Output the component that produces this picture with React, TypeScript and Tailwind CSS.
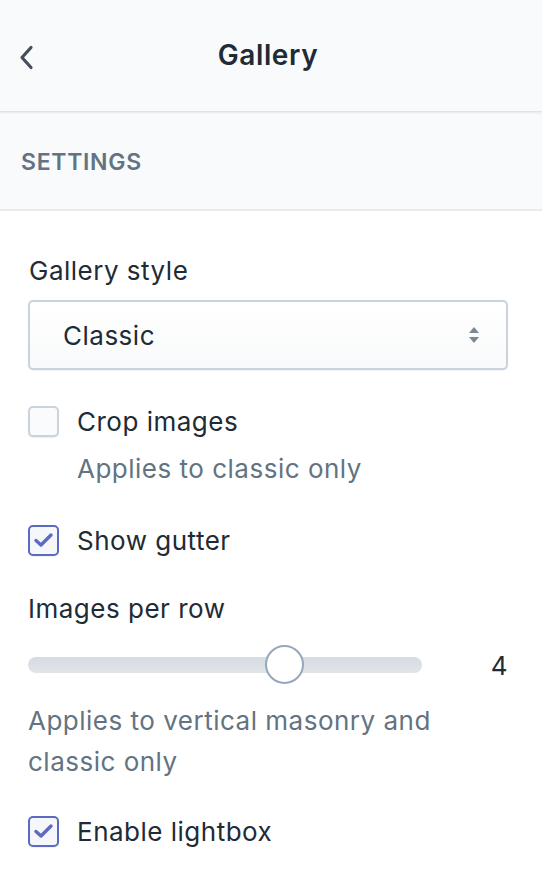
import { useState } from "react";

const font = { fontFamily: "Inter, 'Noto Sans', sans-serif" };

function Checkbox({ checked, label, onToggle }: { checked: boolean; label: string; onToggle: () => void }) {
  return (
    <label className="flex items-center h-[32px] cursor-pointer" onClick={onToggle}>
      <span
        className={
          checked
            ? "w-[31px] h-[31px] rounded-[5px] border-2 border-[#5c6ac4] bg-[#f6f7fb] flex items-center justify-center shadow-[0_1px_1px_rgba(0,0,0,0.06)]"
            : "w-[31px] h-[31px] rounded-[5px] border-2 border-[#cad3dc] bg-[#fafbfc] shadow-[0_1px_1px_rgba(0,0,0,0.08)]"
        }
      >
        {checked && (
          <svg width="21" height="16" viewBox="0 0 21 16" fill="none">
            <path d="M3 8.5 L8 13 L18 3" stroke="#5c6ac4" strokeWidth="3.4" strokeLinecap="round" strokeLinejoin="round" />
          </svg>
        )}
      </span>
      <span className="ml-[18px] text-[26px] tracking-[0.5px] text-[#212b36]">{label}</span>
    </label>
  );
}

export default function App() {
  const [crop, setCrop] = useState(false);
  const [gutter, setGutter] = useState(true);
  const [lightbox, setLightbox] = useState(true);

  return (
    <div className="w-[542px] h-[884px] bg-white overflow-hidden" style={font}>
      {/* Header */}
      <header className="relative h-[112px] bg-[#f9fafb] border-b border-[#dfe3e8] shadow-[0_1px_2px_rgba(0,0,0,0.08)] flex items-center justify-center">
        <button className="absolute left-[16px] top-[44px] w-[20px] h-[26px] flex items-center justify-center">
          <svg width="15" height="25" viewBox="0 0 15 25" fill="none">
            <path d="M12 2.5 L3 12.5 L12 22.5" stroke="#454f5b" strokeWidth="3.2" strokeLinecap="round" strokeLinejoin="round" />
          </svg>
        </button>
        <h1 className="text-[28px] tracking-[0.6px] font-semibold text-[#212b36] -mt-[2px] -ml-[6px]">Gallery</h1>
      </header>

      {/* Section title */}
      <div className="h-[99px] bg-[#f9fafb] border-b-2 border-[#e9ecef] flex items-center px-[21px]">
        <span className="text-[23px] font-semibold uppercase tracking-[0.03em] text-[#637381] mt-[3px]">Settings</span>
      </div>

      {/* Settings */}
      <div className="pl-[28px] pr-[34px] pt-[44px] text-[26px] tracking-[0.5px]">
        <div className="leading-[32px] text-[#212b36] pl-[1px]">Gallery style</div>
        <button className="mt-[13px] w-full h-[70px] rounded-[5px] border-2 border-[#c9d3dd] bg-gradient-to-b from-white to-[#f9fafb] shadow-[0_1px_1px_rgba(0,0,0,0.06)] flex items-center justify-between pl-[33px] pr-[26px]">
          <span className="text-[26px] tracking-[0.5px] text-[#212b36]">Classic</span>
          <svg width="12" height="18" viewBox="0 0 12 18">
            <path d="M6 1 L11 7 L1 7 Z" fill="#7a8896" />
            <path d="M6 17 L11 11 L1 11 Z" fill="#7a8896" />
          </svg>
        </button>

        <div className="mt-[35px]">
          <Checkbox checked={crop} label="Crop images" onToggle={() => setCrop(!crop)} />
        </div>
        <div className="mt-[16px] pl-[49px] leading-[32px] text-[#637381]">Applies to classic only</div>

        <div className="mt-[39px]">
          <Checkbox checked={gutter} label="Show gutter" onToggle={() => setGutter(!gutter)} />
        </div>

        <div className="mt-[37px] leading-[32px] text-[#212b36]">Images per row</div>

        <div className="mt-[20px] h-[40px] flex items-center">
          <div className="relative w-[394px] h-[16px] rounded-full bg-gradient-to-b from-[#d5dbe1] to-[#e0e5ea]">
            <div className="absolute left-[237px] top-[-12px] w-[39px] h-[39px] rounded-full bg-white border-2 border-[#95a8bb]" />
          </div>
          <span className="ml-auto text-[#212b36]">4</span>
        </div>

        <div className="mt-[15px] leading-[41px] text-[#637381]">
          Applies to vertical masonry and
          <br />
          classic only
        </div>

        <div className="mt-[33px]">
          <Checkbox checked={lightbox} label="Enable lightbox" onToggle={() => setLightbox(!lightbox)} />
        </div>
      </div>
    </div>
  );
}
